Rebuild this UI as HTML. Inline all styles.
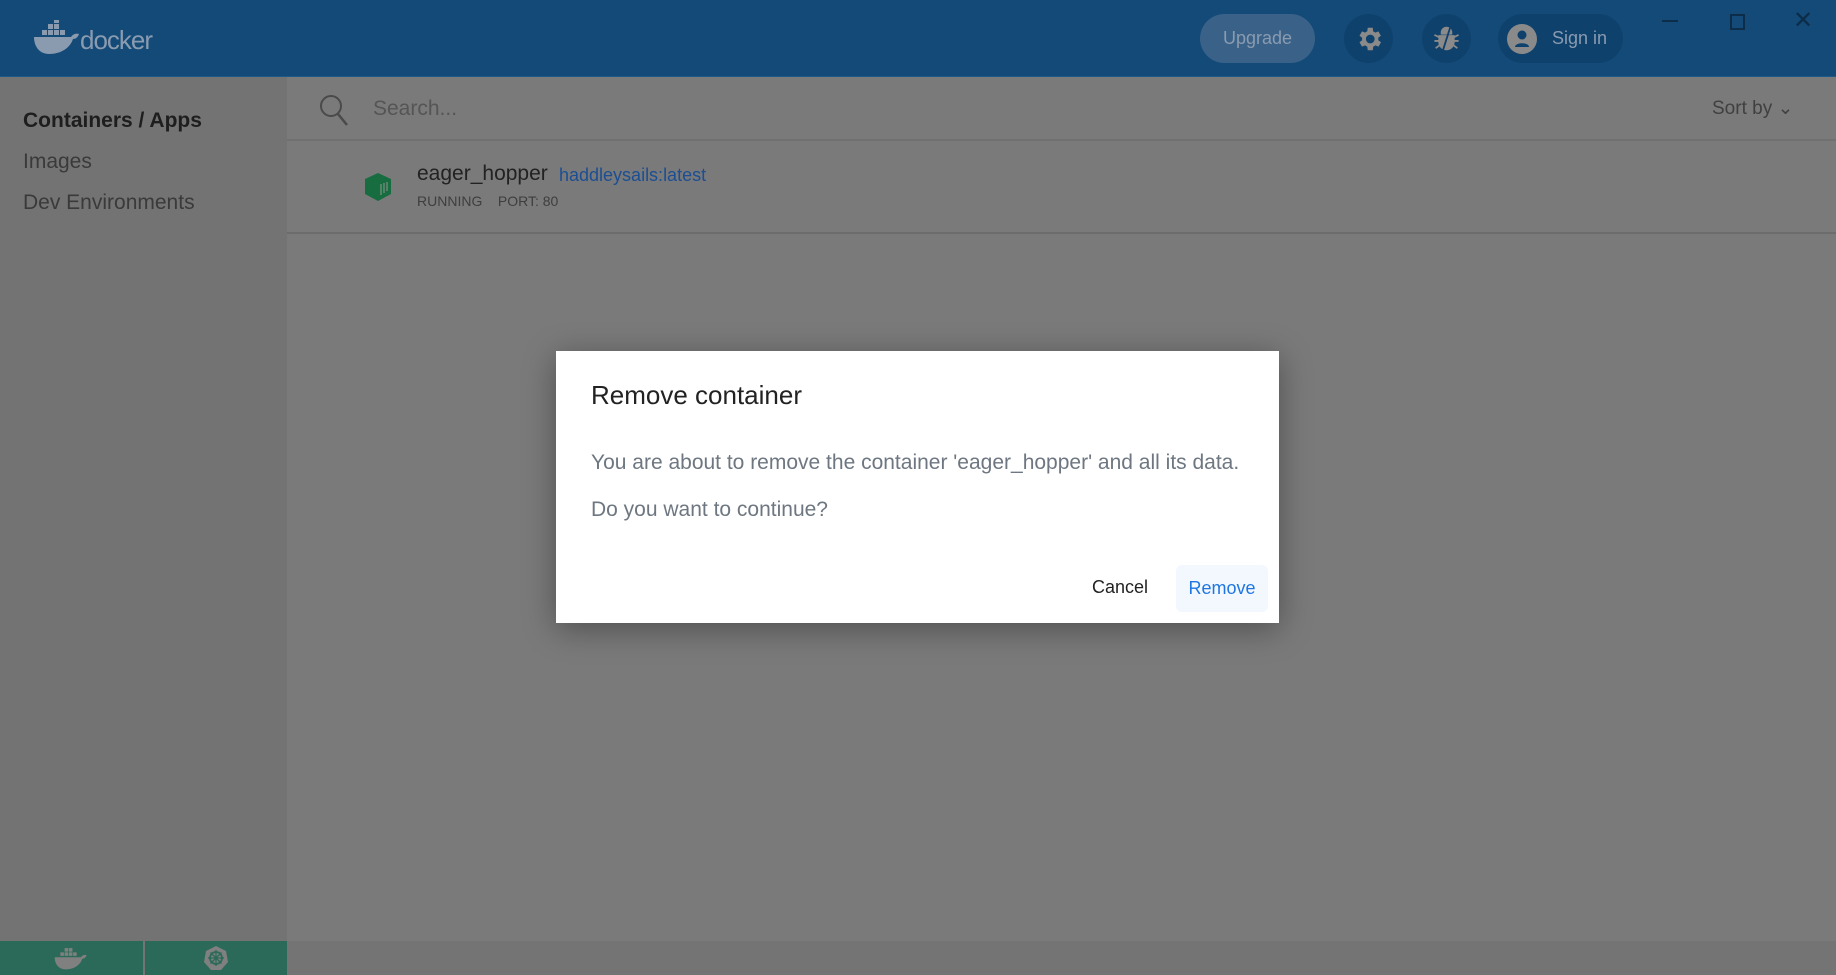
<!DOCTYPE html>
<html><head><meta charset="utf-8"><style>
*{margin:0;padding:0;box-sizing:border-box}
body{width:1836px;height:975px;overflow:hidden;font-family:"Liberation Sans",sans-serif;background:#7a7a7a;position:relative}
.hdr{position:absolute;left:0;top:0;width:1836px;height:77px;background:#134a78;border-bottom:1px solid #1d5a8a}
.side{position:absolute;left:0;top:77px;width:287px;height:864px;background:#737373}
.side div{position:absolute;left:23px;font-size:21px;color:#3a3a3a}
.main{position:absolute;left:287px;top:77px;width:1549px;height:864px;background:#7a7a7a}
.sb{position:absolute;left:0;top:0;width:1549px;height:64px;border-bottom:2px solid #707070}
.row{position:absolute;left:0;top:65px;width:1549px;height:92px;border-bottom:2px solid #6c6c6c}
.bot{position:absolute;left:0;top:941px;width:1836px;height:34px;background:#747474}
.g{position:absolute;top:941px;height:34px;background:#2b6a58}
.dlg{position:absolute;left:556px;top:351px;width:723px;height:272px;background:#fff;box-shadow:0 6px 30px rgba(0,0,0,.35)}
</style></head><body>
<div class="hdr">
 <svg style="position:absolute;left:33px;top:20px" width="48" height="36" viewBox="0 0 48 36"><g fill="#8a9bb0"><rect x="9" y="10" width="5" height="5"/><rect x="15" y="10" width="5" height="5"/><rect x="21" y="10" width="5" height="5"/><rect x="15" y="4" width="5" height="5"/><rect x="21" y="4" width="5" height="5"/><rect x="21" y="-2" width="5" height="5"/><rect x="27" y="10" width="5" height="5"/><path d="M1 17h37c2-3 5-4 8-3-1 3-3 5-6 5-3 9-12 15-24 15C7 34 1 27 1 17z"/></g></svg>
 <div style="position:absolute;left:80px;top:25px;font-size:26px;color:#8a9bb0;letter-spacing:-1px">docker</div>
 <div style="position:absolute;left:1200px;top:14px;width:115px;height:49px;border-radius:25px;background:#3a6288;color:#8a9bb0;font-size:18px;text-align:center;line-height:49px">Upgrade</div>
 <div style="position:absolute;left:1344px;top:14px;width:49px;height:49px;border-radius:25px;background:#0f416d"></div>
 <svg style="position:absolute;left:1354px;top:24px" width="30" height="30" viewBox="0 0 24 24"><path fill="#8a8a8a" d="M19.4 13a7.5 7.5 0 000-2l2.1-1.6-2-3.5-2.5 1a7 7 0 00-1.7-1L15 3h-4l-.4 2.9a7 7 0 00-1.7 1l-2.5-1-2 3.5L6.5 11a7.5 7.5 0 000 2l-2.1 1.6 2 3.5 2.5-1a7 7 0 001.7 1L11 21h4l.4-2.9a7 7 0 001.7-1l2.5 1 2-3.5zM13 15.5a3.5 3.5 0 110-7 3.5 3.5 0 010 7z"/></svg>
 <div style="position:absolute;left:1422px;top:14px;width:49px;height:49px;border-radius:25px;background:#0f416d"></div>
 <svg style="position:absolute;left:1432px;top:24px" width="29" height="29" viewBox="0 0 24 24"><path fill="#8a8a8a" d="M8 7a4 4 0 018 0v1H8zM6 10h12v5a6 6 0 01-12 0zM2 9l4 2M22 9l-4 2M2 14h4M22 14h-4M3 20l4-3M21 20l-4-3" stroke="#8a8a8a" stroke-width="1.5"/><path d="M15 3L9 22" stroke="#0f416d" stroke-width="1.5"/></svg>
 <div style="position:absolute;left:1498px;top:14px;width:125px;height:49px;border-radius:25px;background:#0f416d;color:#8a9bb0;font-size:18px;line-height:49px;padding-left:54px">Sign in</div>
 <svg style="position:absolute;left:1507px;top:24px" width="30" height="30" viewBox="0 0 30 30"><circle cx="15" cy="15" r="15" fill="#8a8a8a"/><circle cx="15" cy="11" r="4.5" fill="#0f416d"/><path d="M8 23c0-5 14-5 14 0z" fill="#0f416d"/></svg>
 <div style="position:absolute;left:1662px;top:20px;width:16px;height:2px;background:#0c2c48"></div>
 <div style="position:absolute;left:1730px;top:14px;width:15px;height:16px;border:2px solid #0c2c48"></div>
 <div style="position:absolute;left:1793px;top:6px;font-size:24px;color:#0c2c48">✕</div>
</div>
<div class="side">
 <div style="top:32px;font-weight:bold;color:#1e1e1e">Containers / Apps</div>
 <div style="top:73px">Images</div>
 <div style="top:114px">Dev Environments</div>
</div>
<div class="main">
 <div class="sb">
  <svg style="position:absolute;left:32px;top:17px" width="30" height="32" viewBox="0 0 30 32"><circle cx="12" cy="12" r="10" fill="none" stroke="#4a4a4a" stroke-width="2"/><path d="M19 20l9 11" stroke="#4a4a4a" stroke-width="2.5"/></svg>
  <div style="position:absolute;left:86px;top:20px;font-size:21px;color:#555">Search...</div>
  <div style="position:absolute;left:1425px;top:20px;font-size:19px;color:#404040">Sort by ⌄</div>
 </div>
 <div class="row">
  <svg style="position:absolute;left:76px;top:30px" width="30" height="30" viewBox="0 0 30 30"><path d="M15 1l13 6v15l-13 7-13-7V7z" fill="#176d3f"/><path d="M18 12v11M21 11v10M24 10v9" stroke="#6a8a74" stroke-width="1.5"/></svg>
  <div style="position:absolute;left:130px;top:20px;font-size:21px;color:#222">eager_hopper</div>
  <div style="position:absolute;left:272px;top:23px;font-size:18px;color:#1b4e94">haddleysails:latest</div>
  <div style="position:absolute;left:130px;top:51px;font-size:14px;color:#3e3e3e">RUNNING &nbsp;&nbsp;&nbsp;PORT: 80</div>
 </div>
</div>
<div class="bot"></div>
<div class="g" style="left:0;width:143px"></div>
<div class="g" style="left:145px;width:142px"></div>
<svg style="position:absolute;left:54px;top:945px" width="34" height="26" viewBox="0 0 48 36"><g fill="#808080"><rect x="9" y="10" width="5" height="5"/><rect x="15" y="10" width="5" height="5"/><rect x="21" y="10" width="5" height="5"/><rect x="15" y="4" width="5" height="5"/><rect x="21" y="4" width="5" height="5"/><rect x="27" y="10" width="5" height="5"/><path d="M1 17h37c2-3 5-4 8-3-1 3-3 5-6 5-3 9-12 15-24 15C7 34 1 27 1 17z"/></g></svg>
<svg style="position:absolute;left:203px;top:945px" width="26" height="26" viewBox="0 0 26 26"><path d="M13 1l10 5 2 11-7 8H8l-7-8 2-11z" fill="#808080"/><circle cx="13" cy="13" r="6" fill="none" stroke="#2b6a58" stroke-width="1.8"/><path d="M13 5v16M5 13h16M7.5 7.5l11 11M18.5 7.5l-11 11" stroke="#2b6a58" stroke-width="1.3"/></svg>
<div class="dlg">
 <div style="position:absolute;left:35px;top:29px;font-size:26px;color:#222">Remove container</div>
 <div style="position:absolute;left:35px;top:100px;font-size:21px;color:#6e7781">You are about to remove the container 'eager_hopper' and all its data.</div>
 <div style="position:absolute;left:35px;top:147px;font-size:21px;color:#6e7781">Do you want to continue?</div>
 <div style="position:absolute;left:536px;top:226px;font-size:18px;color:#222">Cancel</div>
 <div style="position:absolute;left:620px;top:214px;width:92px;height:47px;border-radius:6px;background:#f3f8ff;color:#1f76e0;font-size:18px;text-align:center;line-height:47px">Remove</div>
</div>
</body></html>
